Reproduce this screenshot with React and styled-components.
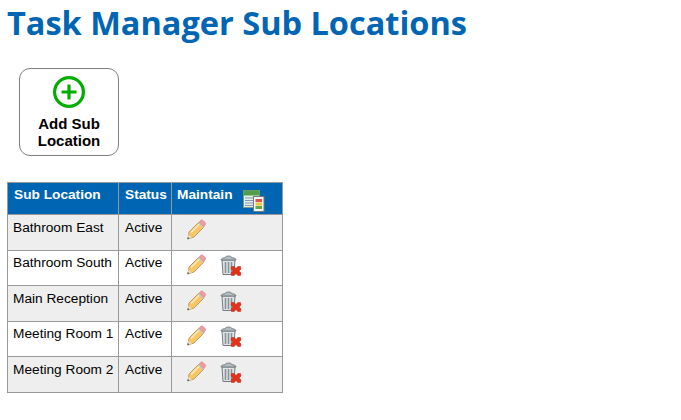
import React from 'react'
import styled, { createGlobalStyle } from 'styled-components'

const GlobalStyle = createGlobalStyle`
  html, body {
    margin: 0;
    padding: 0;
    background: #ffffff;
    font-family: 'Liberation Sans', Arial, sans-serif;
  }
`

const Page = styled.div`
  padding: 0 7px;
  width: 681px;
  height: 420px;
  box-sizing: border-box;
  overflow: hidden;
`

const Title = styled.h1`
  margin: 0;
  padding-top: 1px;
  font-family: 'Open Sans', sans-serif;
  font-size: 32.5px;
  line-height: 44px;
  font-weight: 700;
  color: #0066b3;
`

const AddButton = styled.button`
  display: flex;
  flex-direction: column;
  align-items: center;
  box-sizing: border-box;
  width: 100px;
  height: 88px;
  margin: 23px 0 26px 12px;
  padding: 6px 0 0;
  background: #ffffff;
  border: 1px solid #808080;
  border-radius: 11px;
  font-family: 'Liberation Sans', Arial, sans-serif;
  font-size: 15px;
  line-height: 17px;
  font-weight: 700;
  color: #000000;
  text-align: center;
`

const AddLabel = styled.span`
  margin-top: 6px;
  width: 80px;
`

const Table = styled.table`
  border-collapse: collapse;
  table-layout: fixed;
  width: 275px;
  font-size: 13.7px;
  color: #000000;
`

const HeadRow = styled.tr`
  height: 32px;
  background: #0066b3;
`

const Th = styled.th`
  box-sizing: border-box;
  width: ${(props) => props.$width}px;
  padding: 0 0 8px ${(props) => props.$pad}px;
  border: 1px solid #999999;
  color: #ffffff;
  font-size: 13.7px;
  font-weight: 700;
  text-align: left;
  white-space: nowrap;
`

const MaintainHead = styled.span`
  display: flex;
  align-items: flex-start;
  gap: 10px;
  height: 16px;
`

const HeadIcon = styled.span`
  display: block;
  height: 22px;
  margin-top: 3px;
`

const Row = styled.tr`
  height: 35.5px;
  background: ${(props) => (props.$shaded ? '#eeeeee' : '#ffffff')};
`

const Td = styled.td`
  padding: 4.5px 0 0 ${(props) => props.$pad}px;
  border: 1px solid #999999;
  vertical-align: top;
  line-height: 16px;
  white-space: nowrap;
`

const Actions = styled.div`
  display: flex;
  gap: 12px;
  padding-left: 8px;
  margin-top: -1px;
`

const IconSlot = styled.span`
  display: block;
  width: 22px;
  height: 22px;
`

const AddIcon = () => (
  <svg width="34" height="34" viewBox="0 0 34 34">
    <circle cx="17" cy="17" r="14.4" fill="none" stroke="#00ad00" strokeWidth="3.2" />
    <path d="M17 9.500v15M9.500 17h15" stroke="#00ad00" strokeWidth="3.2" fill="none" />
  </svg>
)

const PencilIcon = () => (
  <svg width="22" height="22" viewBox="0 0 22 22">
    <path d="M4 13 14 3l5 5L9 18l-6 2z" fill="#f6c667" stroke="#b88a45" strokeWidth="0.8" />
    <path d="M6 13.500 15 4.500" stroke="#fce9bd" strokeWidth="1.600" fill="none" />
    <path d="M14.500 2.500l1.200-1.100c.8-.7 1.700-.6 2.400.1l2 2c.7.700.7 1.600 0 2.300L19 7.500z" fill="#f29aa0" stroke="#d97a84" strokeWidth="0.6" />
    <path d="M13.500 3.500l5 5" stroke="#c4c4c4" strokeWidth="1.500" fill="none" />
    <path d="M3.600 15.500 2.200 20.300l4.800-1.400z" fill="#e9dcc2" />
    <path d="M2.900 18 2.200 20.300 4.500 19.600z" fill="#4a4a4a" />
  </svg>
)

const TrashIcon = () => (
  <svg width="24" height="22" viewBox="0 0 24 22">
    <path d="M3 6h13l-1 14.500H4z" fill="#dfe4e7" stroke="#737b81" strokeWidth="1" />
    <path d="M6.500 8v11M9.500 8v11M12.500 8v11" stroke="#8b9399" strokeWidth="1.600" fill="none" />
    <path d="M2 6c0-1.600 2-2.200 3.800-2.200C6.300 2.500 8 2 9.500 2s3.200.5 3.700 1.800c1.800 0 3.800.6 3.800 2.200z" fill="#b4bbc0" stroke="#666e74" strokeWidth="0.8" />
    <path d="M12.500 12.500h2.700l1.800 2 1.800-2h2.700l.5 2.500-2 2 2 2-.5 2.500h-2.700l-1.800-2-1.800 2h-2.700l-.5-2.500 2-2-2-2z" fill="#e5301a" stroke="#b8260f" strokeWidth="0.5" />
  </svg>
)

const ReportIcon = () => (
  <svg width="22" height="22" viewBox="0 0 22 22">
    <rect x="0.500" y="0.500" width="16" height="17" fill="#e8f0e4" stroke="#7f9a86" />
    <rect x="0.500" y="0.500" width="16" height="5" fill="#4f9e4a" />
    <path d="M2 8h8M2 10.500h8M2 13h8M2 15.500h8" stroke="#7f97b8" fill="none" />
    <rect x="10.500" y="6.500" width="10.500" height="15" fill="#f4f4f2" stroke="#6f7a7e" />
    <rect x="12.500" y="9" width="6.500" height="3" fill="#d9534a" />
    <rect x="12.500" y="12.500" width="6.500" height="3" fill="#e9c83f" />
    <rect x="12.500" y="16" width="6.500" height="3" fill="#62a845" />
  </svg>
)

const rows = [
  { name: 'Bathroom East', canDelete: false },
  { name: 'Bathroom South', canDelete: true },
  { name: 'Main Reception', canDelete: true },
  { name: 'Meeting Room 1', canDelete: true },
  { name: 'Meeting Room 2', canDelete: true },
]

const App = () => {
  return (
    <Page>
      <GlobalStyle />
      <Title>Task Manager Sub Locations</Title>
      <AddButton>
        <AddIcon />
        <AddLabel>Add Sub Location</AddLabel>
      </AddButton>
      <Table>
        <thead>
          <HeadRow>
            <Th $width={111} $pad={6}>Sub Location</Th>
            <Th $width={53} $pad={6}>Status</Th>
            <Th $width={111} $pad={5}>
              <MaintainHead>
                Maintain
                <HeadIcon>
                  <ReportIcon />
                </HeadIcon>
              </MaintainHead>
            </Th>
          </HeadRow>
        </thead>
        <tbody>
          {rows.map((row, i) => (
            <Row key={row.name} $shaded={i % 2 === 0}>
              <Td $pad={5}>{row.name}</Td>
              <Td $pad={6}>Active</Td>
              <Td $pad={5}>
                <Actions>
                  <IconSlot>
                    <PencilIcon />
                  </IconSlot>
                  {row.canDelete && (
                    <IconSlot>
                      <TrashIcon />
                    </IconSlot>
                  )}
                </Actions>
              </Td>
            </Row>
          ))}
        </tbody>
      </Table>
    </Page>
  )
}

export default App
